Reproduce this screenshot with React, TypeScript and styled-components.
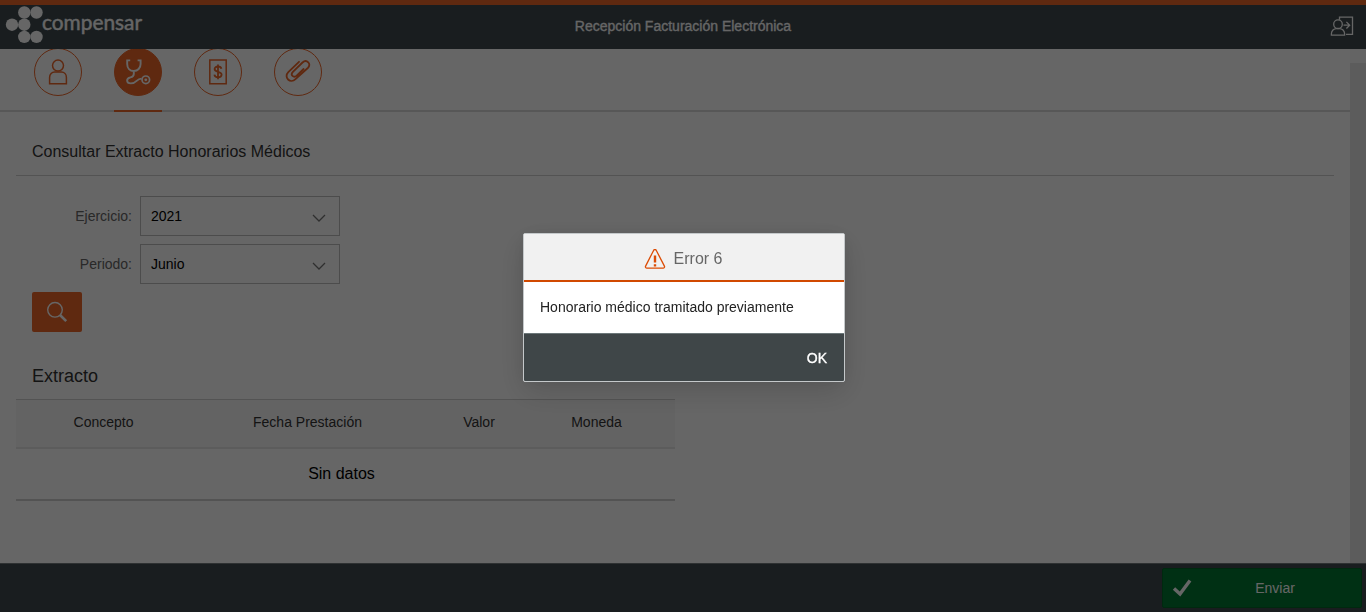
import React from "react";
import styled, { createGlobalStyle } from "styled-components";

const GlobalStyle = createGlobalStyle`
  * { box-sizing: border-box; }
  html, body { margin: 0; padding: 0; overflow: hidden; }
  body { font-family: "Liberation Sans", Arial, sans-serif; font-size: 14px; color: #333; }
  svg { display: block; flex: none; }
`;

const ORANGE = "#ee6628";

const Page = styled.div`
  height: 612px;
  display: flex;
  flex-direction: column;
  background: #fff;
`;

const Shell = styled.header`
  height: 49px;
  flex: none;
  display: grid;
  grid-template-columns: 1fr auto 1fr;
  align-items: center;
  border-top: 5px solid ${ORANGE};
  background: #3f4a4f;
  color: #fff;
`;

const ShellTitle = styled.h1`
  margin: 0 0 3px;
  font-size: 14px;
  font-weight: 400;
  -webkit-text-stroke: 0.3px #fff;
`;

const LogoutSlot = styled.div`
  display: flex;
  justify-content: flex-end;
  padding: 0 12px 2px 0;
`;

const Content = styled.main`
  flex: 1;
  min-height: 0;
  display: flex;
`;

const Scroller = styled.div`
  flex: 1;
  min-width: 0;
`;

const ScrollTrack = styled.div`
  width: 16px;
  padding-top: 14px;
  background: #fafafa;
`;

const ScrollThumb = styled.div`
  height: 100%;
  background: #e6e6e6;
`;

const TabBar = styled.nav`
  height: 63px;
  display: flex;
  gap: 32px;
  padding-left: 34px;
  border-bottom: 2px solid #dadada;
`;

const Tab = styled.div<{ $active?: boolean }>`
  width: 48px;
  height: 63px;
  overflow: hidden;
  border-bottom: 2px solid ${(p) => (p.$active ? ORANGE : "transparent")};
`;

const TabCircle = styled.div<{ $active?: boolean }>`
  width: 48px;
  height: 48px;
  margin-top: -1px;
  display: flex;
  align-items: center;
  justify-content: center;
  border: 1px solid ${ORANGE};
  border-radius: 50%;
  background: ${(p) => (p.$active ? ORANGE : "transparent")};
  color: ${(p) => (p.$active ? "#fff" : ORANGE)};
`;

const Section = styled.section`
  padding: 0 16px;
`;

const FormTitle = styled.h2`
  height: 64px;
  margin: 0;
  padding: 0 16px;
  border-bottom: 1px solid #cfcfcf;
  font-size: 16px;
  font-weight: 400;
  line-height: 79px;
`;

const Form = styled.div`
  display: flex;
  flex-direction: column;
  gap: 8px;
  padding: 20px 16px 0;
`;

const Field = styled.div`
  display: flex;
  align-items: center;
  gap: 8px;
`;

const Label = styled.label`
  width: 100px;
  text-align: right;
  color: #666;
`;

const Select = styled.div`
  width: 200px;
  height: 40px;
  display: flex;
  align-items: center;
  justify-content: space-between;
  padding: 0 13px 0 10px;
  border: 1px solid #bfbfbf;
  color: #000;
`;

const SearchButton = styled.button`
  width: 50px;
  height: 40px;
  display: flex;
  align-items: center;
  justify-content: center;
  padding: 0;
  border: 0;
  border-radius: 2px;
  background: ${ORANGE};
`;

const TableTitle = styled.h3`
  height: 67px;
  margin: 0;
  padding-left: 16px;
  font-size: 18px;
  font-weight: 400;
  line-height: 89px;
`;

const Table = styled.div`
  width: 659px;
`;

const TableHead = styled.div`
  height: 50px;
  display: grid;
  grid-template-columns: 175px 233px 110px 125px 16px;
  align-items: center;
  border-top: 1px solid #cfcfcf;
  border-bottom: 2px solid #e5e5e5;
  background: #f7f7f7;
  text-align: center;
  padding-bottom: 3px;
`;

const TableEmpty = styled.div`
  height: 52px;
  padding-right: 8px;
  border-bottom: 2px solid #cfcfcf;
  color: #000;
  font-size: 16px;
  line-height: 50px;
  text-align: center;
`;

const FooterBar = styled.footer`
  height: 49px;
  flex: none;
  display: flex;
  justify-content: flex-end;
  padding: 4px 4px 0 0;
  border-top: 1px solid #737b7e;
  background: #3f4a4f;
`;

const SendButton = styled.button`
  width: 200px;
  height: 40px;
  display: grid;
  grid-template-columns: 20px 1fr;
  align-items: center;
  padding: 0 3px 0 9px;
  border: 1px solid #006627;
  border-radius: 2px;
  background: #007833;
  color: #fff;
  font: 14px "Liberation Sans", Arial, sans-serif;
`;

const Overlay = styled.div`
  position: fixed;
  inset: 0;
  display: flex;
  align-items: flex-start;
  justify-content: center;
  padding: 233px 0 0 2px;
  background: rgba(0, 0, 0, 0.6);
`;

const Dialog = styled.div`
  width: 322px;
  height: 149px;
  display: flex;
  flex-direction: column;
  border: 1px solid #c4c8ca;
  border-radius: 2px;
  overflow: hidden;
  background: #fff;
  box-shadow: 0 10px 30px rgba(0, 0, 0, 0.15), 0 0 20px rgba(0, 0, 0, 0.06);
`;

const DialogHeader = styled.div`
  height: 48px;
  display: flex;
  align-items: center;
  justify-content: center;
  gap: 8px;
  border-bottom: 2px solid #d14900;
  background: #f1f1f1;
  color: #666;
  font-size: 16px;
  padding: 3px 2px 0 0;
`;

const DialogBody = styled.div`
  height: 51px;
  padding: 0 16px;
  color: #222;
  line-height: 50px;
`;

const DialogFooter = styled.div`
  flex: 1;
  display: flex;
  align-items: center;
  justify-content: flex-end;
  padding-right: 17px;
  border-top: 1px solid #6c7779;
  background: #3f4648;
`;

const OkButton = styled.button`
  padding: 0;
  border: 0;
  background: none;
  color: #fff;
  font: 14px "Liberation Sans", Arial, sans-serif;
  -webkit-text-stroke: 0.35px #fff;
`;

const Logo = () => (
  <svg width="150" height="44" viewBox="0 5 150 44" fill="#fff">
    {[[24.3, 12.5], [36.5, 12.5], [12, 24.7], [24.3, 24.7], [24.3, 36.9], [36.5, 36.9]].map(([x, y]) => (
      <circle key={`${x}-${y}`} cx={x} cy={y} r="6.2" />
    ))}
    <text x="42" y="30" fontFamily="Lato, sans-serif" fontSize="20.5" textLength="100" lengthAdjust="spacingAndGlyphs" stroke="#fff" strokeWidth="0.4">
      compensar
    </text>
  </svg>
);

const LogoutIcon = () => (
  <svg width="24" height="21" viewBox="0 0 24 21" fill="none" stroke="#fff" strokeWidth="1.3">
    <circle cx="8" cy="8.2" r="4.3" />
    <path d="M1.4 19.2v-1.5c0-3 2.5-5.1 5-5.1h3.2c2.5 0 5 2.1 5 5.1v1.5z" />
    <path d="M9.5 3.8V1.2h13V18.3H16M13.5 9.2h6M16.4 5.9l3.3 3.3-3.3 3.3" />
  </svg>
);

const PersonIcon = () => (
  <svg width="20" height="26" viewBox="0 0 20 26" fill="none" stroke="currentColor" strokeWidth="1.5">
    <circle cx="10" cy="6.6" r="5.5" />
    <path d="M1.6 24.8v-6.3c0-3.2 2.3-5.4 5-5.4h6.8c2.7 0 5 2.2 5 5.4v6.3z" />
  </svg>
);

const StethoscopeIcon = () => (
  <svg width="26" height="26" viewBox="0 0 26 26" fill="none" stroke="currentColor" strokeWidth="1.9">
    <path d="M5.2 1.4H2.2V5c0 4 2.6 7 6.6 7s6.8-3 6.8-7V1.4h-3M8.8 12v3c0 2.4-1.2 3-3.3 3.4-4.7 1-4.4 6 .3 6 6.4 0 5.2-4.8 10.7-4.8" />
    <circle cx="20.8" cy="20.8" r="3.8" strokeWidth="1.7" />
    <circle cx="20.8" cy="20.8" r="1.4" fill="currentColor" stroke="none" />
  </svg>
);

const InvoiceIcon = () => (
  <svg width="20" height="26" viewBox="0 0 20 26" fill="none" stroke="currentColor" strokeWidth="1.5">
    <path d="M1.8 1.1h16.4v23.6H1.8z" />
    <path d="M13.4 9.7c-.3-1.5-1.6-2.2-3.4-2.2-2 0-3.4 1-3.4 2.6 0 3.7 7 1.9 7 5.5 0 1.8-1.5 2.8-3.5 2.8-2.2 0-3.5-1-3.7-2.7M10 5.5v14.8" strokeWidth="1.8" />
  </svg>
);

const ClipIcon = () => (
  <svg width="26" height="24" viewBox="0 0 26 24" fill="none" stroke="currentColor" strokeWidth="1.8" strokeLinecap="round">
    <path d="M14 1.8 3.3 12.2c-5 5.1 2 12 7.2 7L22.8 8c4.2-4.1-1.2-9.3-5.3-5.5L7.9 11.8c-3 3.1.7 6.7 3.8 3.8L18.6 9" />
  </svg>
);

const Chevron = () => (
  <svg width="14" height="8" viewBox="0 0 14 8" fill="none" stroke="#777" strokeWidth="1.3" transform="translate(0 2)">
    <path d="m1 1 6 6 6-6" />
  </svg>
);

const SearchIcon = () => (
  <svg width="22" height="22" viewBox="0 0 22 22" fill="none" stroke="#fff">
    <circle cx="9" cy="8.8" r="7.3" strokeWidth="1.4" />
    <path d="m14 14 6.2 6.2" strokeWidth="2.6" />
  </svg>
);

const CheckIcon = () => (
  <svg width="20" height="18" viewBox="0 0 20 18" fill="none" stroke="#fff" strokeWidth="3.4">
    <path d="m2 9.5 6 5.5L18 1.5" />
  </svg>
);

const AlertIcon = () => (
  <svg width="22" height="20" viewBox="0 0 22 20" fill="none" stroke="#dc4c05" strokeWidth="1.3">
    <path d="M9.7 1.2c.5-.9 2-.9 2.5 0l8.2 15.9c.5 1-.2 2.1-1.3 2.1H2.9c-1.1 0-1.8-1.1-1.3-2.1z" />
    <path d="M11 6.6v7M11 15.2v2.2" strokeWidth="2.4" />
  </svg>
);

const tabs = [
  { id: "persona", Icon: PersonIcon },
  { id: "honorarios", Icon: StethoscopeIcon, active: true },
  { id: "factura", Icon: InvoiceIcon },
  { id: "adjuntos", Icon: ClipIcon },
];

const fields = [
  { label: "Ejercicio:", value: "2021" },
  { label: "Periodo:", value: "Junio" },
];

export default function App() {
  return (
    <>
      <GlobalStyle />
      <Page>
        <Shell>
          <Logo />
          <ShellTitle>Recepción Facturación Electrónica</ShellTitle>
          <LogoutSlot><LogoutIcon /></LogoutSlot>
        </Shell>
        <Content>
          <Scroller>
            <TabBar>
              {tabs.map(({ id, Icon, active }) => (
                <Tab key={id} $active={active}>
                  <TabCircle $active={active}><Icon /></TabCircle>
                </Tab>
              ))}
            </TabBar>
            <Section>
              <FormTitle>Consultar Extracto Honorarios Médicos</FormTitle>
              <Form>
                {fields.map((f) => (
                  <Field key={f.label}>
                    <Label>{f.label}</Label>
                    <Select>{f.value}<Chevron /></Select>
                  </Field>
                ))}
                <SearchButton><SearchIcon /></SearchButton>
              </Form>
              <TableTitle>Extracto</TableTitle>
              <Table>
                <TableHead>
                  <span>Concepto</span>
                  <span>Fecha Prestación</span>
                  <span>Valor</span>
                  <span>Moneda</span>
                </TableHead>
                <TableEmpty>Sin datos</TableEmpty>
              </Table>
            </Section>
          </Scroller>
          <ScrollTrack><ScrollThumb /></ScrollTrack>
        </Content>
        <FooterBar>
          <SendButton><CheckIcon /><span>Enviar</span></SendButton>
        </FooterBar>
      </Page>
      <Overlay>
        <Dialog>
          <DialogHeader><AlertIcon /><span>Error 6</span></DialogHeader>
          <DialogBody>Honorario médico tramitado previamente</DialogBody>
          <DialogFooter><OkButton>OK</OkButton></DialogFooter>
        </Dialog>
      </Overlay>
    </>
  );
}
